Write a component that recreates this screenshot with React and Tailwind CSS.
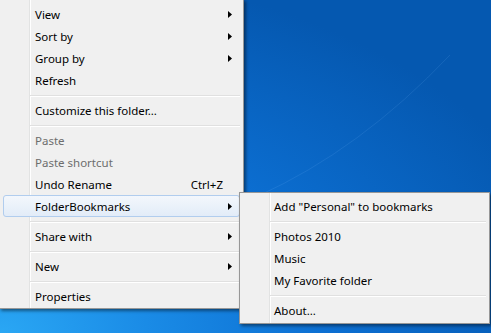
import React from "react";

const Arrow = () => (
  <svg width="4" height="7" viewBox="0 0 4 7" className="block">
    <polygon points="0,0 4,3.5 0,7" fill="#000" />
  </svg>
);

const Item = ({ label, arrow, shortcut, disabled, active, pl = "pl-[35px]" }) => (
  <div
    className={
      "relative flex h-[22px] items-center pt-[2px] pr-[11px] " +
      pl +
      (active
        ? " mx-[3px] rounded-[3px] border border-[#b1cdee] bg-[linear-gradient(to_bottom,#f3f7fc,#e2ecf8)]"
        : "") +
      (disabled ? " text-[#6d6d6d]" : " text-black")
    }
    style={active ? { paddingLeft: 31, paddingRight: 7 } : undefined}
  >
    <span className="flex-1 whitespace-nowrap">{label}</span>
    {shortcut && <span className="mr-[9px] whitespace-nowrap">{shortcut}</span>}
    {arrow && (
      <span className="-mt-[2px]">
        <Arrow />
      </span>
    )}
  </div>
);

const Sep = ({ ml = "ml-[30px]" }) => (
  <div className={"flex h-[8px] flex-col justify-center pt-[2px] mr-[3px] " + ml}>
    <div className="h-px bg-[#e0e0e0]" />
    <div className="h-px bg-white" />
  </div>
);

export default function App() {
  return (
    <div
      className="relative h-[333px] w-[491px] overflow-hidden bg-[radial-gradient(ellipse_120%_110%_at_0%_100%,#2aa7f4_0%,#1a8be6_25%,#0c6fd2_55%,#0558b0_100%)] text-[11.5px] leading-none"
      style={{ fontFamily: '"Segoe UI", "Noto Sans", "Open Sans", sans-serif' }}
    >
      <svg className="absolute inset-0" width="491" height="333" viewBox="0 0 491 333">
        <path d="M258 196 Q 360 150 450 55" stroke="rgba(140,200,255,0.12)" strokeWidth="1" fill="none" />
      </svg>

      {/* main context menu */}
      <div className="absolute left-[-1px] top-[-1px] w-[245px] border border-[#979797] bg-[linear-gradient(to_right,#f0f0f0_29px,#e2e3e3_29px,#e2e3e3_30px,#ffffff_30px,#ffffff_31px,#f0f0f0_31px)] pt-[3px] pb-px shadow-[2px_2px_3px_rgba(0,0,0,0.45)]">
        <Item label="View" arrow />
        <Item label="Sort by" arrow />
        <Item label="Group by" arrow />
        <Item label="Refresh" />
        <Sep />
        <Item label="Customize this folder..." />
        <Sep />
        <Item label="Paste" disabled />
        <Item label="Paste shortcut" disabled />
        <Item label="Undo Rename" shortcut="Ctrl+Z" />
        <Item label="FolderBookmarks" arrow active />
        <Sep />
        <Item label="Share with" arrow />
        <Sep />
        <Item label="New" arrow />
        <Sep />
        <Item label="Properties" />
      </div>

      {/* submenu */}
      <div className="absolute left-[239px] top-[192px] w-[251px] border border-[#979797] bg-[linear-gradient(to_right,#f0f0f0_29px,#e2e3e3_29px,#e2e3e3_30px,#ffffff_30px,#ffffff_31px,#f0f0f0_31px)] py-[2px] shadow-[2px_2px_3px_rgba(0,0,0,0.45)]">
        <Item label={'Add "Personal" to bookmarks'} pl="pl-[34px]" />
        <Sep />
        <Item label="Photos 2010" pl="pl-[34px]" />
        <Item label="Music" pl="pl-[34px]" />
        <Item label="My Favorite folder" pl="pl-[34px]" />
        <Sep />
        <Item label="About..." pl="pl-[34px]" />
      </div>
    </div>
  );
}
